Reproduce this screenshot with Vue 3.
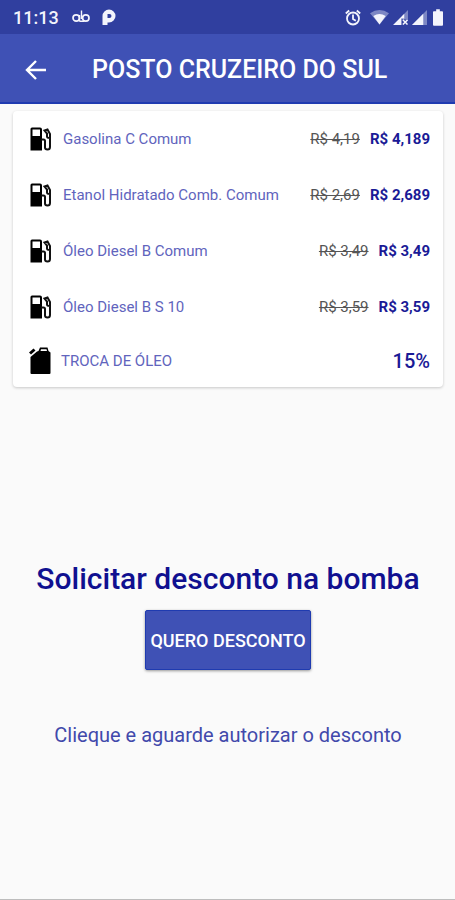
<script setup>
const fuels = [
  { name: 'Gasolina C Comum', oldPrice: 'R$ 4,19', price: 'R$ 4,189' },
  { name: 'Etanol Hidratado Comb. Comum', oldPrice: 'R$ 2,69', price: 'R$ 2,689' },
  { name: 'Óleo Diesel B Comum', oldPrice: 'R$ 3,49', price: 'R$ 3,49' },
  { name: 'Óleo Diesel B S 10', oldPrice: 'R$ 3,59', price: 'R$ 3,59' }
]
</script>

<template>
  <div class="screen">
    <div class="status">
      <span class="clock">11:13</span>
      <svg class="loop" width="18" height="15" viewBox="0 0 18 15" fill="none" stroke="currentColor" stroke-width="1.700">
        <circle cx="4.200" cy="8" r="3.200" />
        <circle cx="13.800" cy="8" r="3.200" />
        <path d="M7.500 11.500V5M9.500 0.500v8.500M7.500 11.300h5" stroke-width="1.400" />
      </svg>
      <svg class="parking" width="14" height="17" viewBox="0 0 14 17">
        <path fill="currentColor" fill-rule="evenodd" d="M7 0.500a6.500 6.500 0 0 1 0 13H5.500V16H0.500V7A6.500 6.500 0 0 1 7 0.500ZM7.500 5H5.500V9H7.500A2 2 0 0 0 7.500 5Z" />
      </svg>
      <div class="signals">
        <svg width="16" height="17" viewBox="0 0 16 17" fill="none" stroke="currentColor" stroke-width="1.800">
          <circle cx="8" cy="9.500" r="6" />
          <path d="M8 5.500v4.500l2.800 1.700M0.800 4.500L4.200 1.500M15.200 4.500L11.800 1.500" />
        </svg>
        <svg class="wifi" width="19" height="16" viewBox="0 0 20 16" fill="currentColor">
          <path opacity=".4" d="M0 4Q10-3 20 4L10 16Z" />
          <path d="M3.500 7Q10 2.500 16.500 7L10 16Z" />
        </svg>
        <svg width="15" height="15" viewBox="0 0 16 16" fill="currentColor">
          <path opacity=".4" d="M16 0V10H10V6Z" />
          <path d="M0 16L12 4V9H9V16Z" />
          <path d="M10.500 10.500l5 5M15.500 10.500l-5 5" stroke="currentColor" stroke-width="1.600" />
        </svg>
        <svg width="15" height="15" viewBox="0 0 16 16" fill="currentColor">
          <path opacity=".4" d="M16 0V16H0Z" />
          <path d="M12 4V16H0Z" />
        </svg>
        <svg class="battery" width="10" height="17" viewBox="0 0 11 18" fill="currentColor">
          <path d="M3.500 0h4v2H10a1 1 0 0 1 1 1v14a1 1 0 0 1-1 1H1a1 1 0 0 1-1-1V3a1 1 0 0 1 1-1h2.500Z" />
        </svg>
      </div>
    </div>
    <header class="bar">
      <button class="back" type="button" aria-label="Voltar">
        <svg width="22" height="20" viewBox="0 0 22 20" fill="none" stroke="currentColor" stroke-width="2.400">
          <path d="M21 10H2M11 1L2 10l9 9" />
        </svg>
      </button>
      <h1>POSTO CRUZEIRO DO SUL</h1>
    </header>
    <main>
      <ul class="card">
        <li v-for="fuel in fuels" :key="fuel.name" class="row">
          <svg class="icon" width="23" height="24" viewBox="0 0 23 24">
            <path fill="#000" fill-rule="evenodd" d="M3 0.500H11A2 2 0 0 1 13 2.500V23.500H1.500V2A1.500 1.500 0 0 1 3 0.500ZM3.500 2.500V9H11V2.500Z" />
            <path fill="none" stroke="#111" stroke-width="2" d="M12 12.500H14.500Q16 12.500 16 14V20.500Q16 22.500 18.500 22.500T21 20V7L18.500 2.500L15.500 3.500L18 6.500V9.500Q18 11 21 11" />
          </svg>
          <span class="name">{{ fuel.name }}</span>
          <s class="old">{{ fuel.oldPrice }}</s>
          <strong class="price">{{ fuel.price }}</strong>
        </li>
        <li class="row service">
          <svg class="icon" width="22" height="28" viewBox="0 0 22 28">
            <path fill="#000" fill-rule="evenodd" d="M9.500 4L11 0.500H18.500L19.500 4L21.500 5.500V26Q21.500 27 20.500 27H2.500Q1.500 27 1.500 26V10L8 4.500ZM12 2.200L11.500 4H18L17.500 2.200Z" />
            <path fill="none" stroke="#000" stroke-width="3" d="M1 6.500L5.500 2.500" />
          </svg>
          <span class="name">TROCA DE ÓLEO</span>
          <strong class="percent">15%</strong>
        </li>
      </ul>
      <section class="request">
        <h2>Solicitar desconto na bomba</h2>
        <button class="cta" type="button">QUERO DESCONTO</button>
        <p>Clieque e aguarde autorizar o desconto</p>
      </section>
    </main>
  </div>
</template>

<style>
body {
  margin: 0;
  background: #fafafa;
}
</style>

<style scoped>
.screen {
  box-sizing: border-box;
  min-height: 100vh;
  border-bottom: 1px solid #bdbdbd;
  background: #fafafa;
  font-family: Roboto, "Liberation Sans", sans-serif;
}
.status {
  display: flex;
  align-items: center;
  height: 34px;
  padding: 0 12px 0 13px;
  background: #303f9f;
  color: #f3f4fc;
}
.clock {
  font-size: 18px;
  font-weight: 500;
}
.loop {
  margin-left: 13px;
}
.parking {
  margin-left: 12px;
}
.signals {
  display: flex;
  align-items: center;
  gap: 4px;
  margin-left: auto;
}
.wifi {
  margin-left: 5px;
}
.battery {
  margin-left: 2px;
}
.bar {
  display: flex;
  align-items: center;
  box-sizing: border-box;
  height: 70px;
  padding: 4px 25px 0;
  border-bottom: 2px solid #1f3bb0;
  background: #3f51b5;
  color: #fff;
}
.back {
  display: flex;
  padding: 0;
  border: 0;
  background: none;
  color: inherit;
}
h1 {
  margin: 0 0 0 45px;
  font-size: 25px;
  font-weight: 500;
  line-height: 32px;
  white-space: nowrap;
}
main {
  padding: 7px 12px 0 13px;
}
.card {
  margin: 0;
  padding: 0 13px 0 16px;
  border-radius: 4px;
  background: #fff;
  box-shadow: 0 1px 3px rgba(0, 0, 0, 0.2);
  list-style: none;
}
.row {
  display: flex;
  align-items: center;
  height: 56px;
  color: #1a1a96;
  font-size: 15px;
  white-space: nowrap;
}
.icon {
  flex: none;
}
.name {
  flex: 1;
  margin-left: 11px;
  color: #6164bd;
}
.old {
  color: #555;
}
.price {
  margin-left: 10px;
  font-weight: 700;
}
.service {
  height: 52px;
}
.service .name {
  margin-left: 10px;
}
.percent {
  font-size: 20px;
  font-weight: 500;
}
.request {
  display: flex;
  flex-direction: column;
  align-items: center;
  padding-top: 174px;
}
h2 {
  margin: 0;
  color: #101090;
  font-size: 30px;
  font-weight: 500;
  line-height: 36px;
  white-space: nowrap;
}
.cta {
  height: 60px;
  margin-top: 13px;
  padding: 0 4px;
  border: 1px solid #1f3bb0;
  border-radius: 2px;
  background: #3f51b5;
  box-shadow: 0 1px 3px rgba(0, 0, 0, 0.4);
  color: #fff;
  font: 500 18px Roboto, "Liberation Sans", sans-serif;
}
p {
  margin: 53px 0 0;
  color: #4149ab;
  font-size: 20px;
  line-height: 24px;
}
</style>
